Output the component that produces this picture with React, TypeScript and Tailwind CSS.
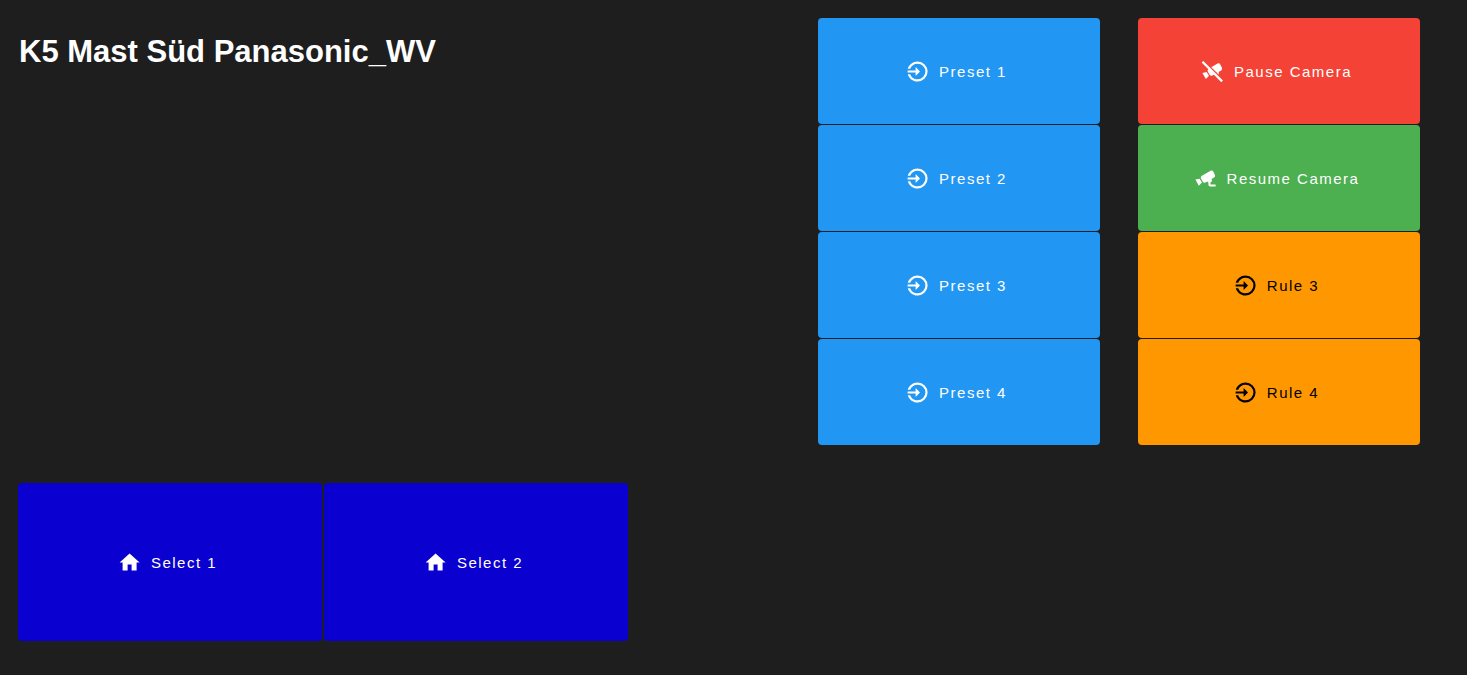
type IconName = 'enter' | 'home' | 'cctv' | 'cctvOff';

const paths: Record<IconName, string> = {
  enter:
    'M12 2C7.2 2 3.2 5.3 2.2 9.3H4.6C5.6 6.3 8.4 4.2 12 4.2A7.8 7.8 0 0 1 12 19.8C8.4 19.8 5.6 17.7 4.6 14.7H2.2C3.2 18.7 7.2 22 12 22A10 10 0 0 0 12 2ZM10 7.6V10.9H2V13.1H10V16.4L14.4 12Z',
  home: 'M10,20V14H14V20H19V12H22L12,3L2,12H5V20H10Z',
  cctv: 'M17 4.2L8.3 9.2C7.2 9.8 6.9 11.2 7.5 12.3L9.2 15.3C9.8 16.3 10.9 16.6 11.9 16L13.6 15.1C13.9 15.5 14.3 15.9 14.8 16.1V18C14.8 19.1 15.7 20 16.8 20H22V18H16.8V16.1C17.7 15.7 18.3 14.9 18.3 13.9C18.3 13.4 18.2 13 18 12.6L20.5 11.1C21.5 10.5 21.8 9.2 21.2 8.2L19.7 5.1C19.2 4 18 3.6 17 4.2ZM6 12.2L1.8 13L5.2 19.2L8.4 16Z',
  cctvOff:
    'M2.7 1.4L1 3L7.8 9.8C7 10.4 6.8 11.4 7.4 12.4L9.1 15.3C9.7 16.3 10.9 16.6 11.9 16L13.3 15.2L20.7 22.8L22.4 21.1L2.7 1.4ZM6 12.6L1.8 13.4L5.3 19.4L8.4 16.3ZM10.7 7.7L17 4.1C18 3.5 19.2 3.9 19.7 4.9L21.2 8C21.8 9.2 21.5 10.5 20.5 11.1L18 12.6C18.4 13.4 18.4 14.2 18.1 15.1Z',
};

function Tile({ label, icon, className }: { label: string; icon: IconName; className: string }) {
  return (
    <button
      type="button"
      className={`flex items-center justify-center rounded pt-px pr-[5px] text-[15px] leading-6 tracking-[1.5px] ${className}`}
    >
      <svg viewBox="0.4 0.5 24 24" className="mr-[9px] size-6 fill-current" aria-hidden="true">
        <path d={paths[icon]} />
      </svg>
      <span>{label}</span>
    </button>
  );
}

const presets = ['Preset 1', 'Preset 2', 'Preset 3', 'Preset 4'];

const actions: { label: string; icon: IconName; className: string }[] = [
  { label: 'Pause Camera', icon: 'cctvOff', className: 'bg-[#f44336] text-white' },
  { label: 'Resume Camera', icon: 'cctv', className: 'bg-[#4caf50] text-white' },
  { label: 'Rule 3', icon: 'enter', className: 'bg-[#ff9800] text-black' },
  { label: 'Rule 4', icon: 'enter', className: 'bg-[#ff9800] text-black' },
];

export default function App() {
  return (
    <main className="flex h-screen flex-col overflow-hidden bg-[#1e1e1e] pt-[18px] pl-[18px] font-['Liberation_Sans',Arial,sans-serif] text-white">
      <div className="flex">
        <h1 className="w-[800px] pt-2.5 pl-px text-[31px] leading-12 font-bold">K5 Mast Süd Panasonic_WV</h1>
        <div className="grid w-[282px] auto-rows-[106px] gap-px">
          {presets.map((label) => (
            <Tile key={label} label={label} icon="enter" className="bg-[#2196f3] text-white" />
          ))}
        </div>
        <div className="ml-[38px] grid w-[282px] auto-rows-[106px] gap-px">
          {actions.map((action) => (
            <Tile key={action.label} {...action} />
          ))}
        </div>
      </div>
      <div className="mt-[38px] flex gap-0.5">
        <Tile label="Select 1" icon="home" className="h-[158px] w-[304px] bg-[#0a00cf] text-white" />
        <Tile label="Select 2" icon="home" className="h-[158px] w-[304px] bg-[#0a00cf] text-white" />
      </div>
    </main>
  );
}
